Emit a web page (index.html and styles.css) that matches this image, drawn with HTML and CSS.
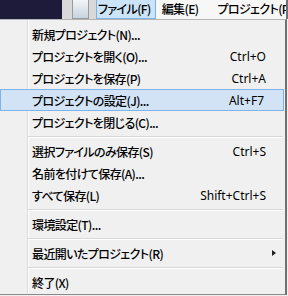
FILE: index.html
```html
<!DOCTYPE html>
<html lang="ja">
<head>
  <meta charset="UTF-8" />
  <title>ファイル メニュー</title>
  <link rel="stylesheet" href="styles.css">
</head>
<body>
  <div class="topbar">
    <div class="desk"></div>
    <div class="pane"><div class="thumb"></div></div>
    <nav class="menubar">
      <span class="top-item open">ファイル(F)</span>
      <span class="top-item">編集(E)</span>
      <span class="top-item">プロジェクト(P)</span>
    </nav>
  </div>

  <div class="menu">
    <div class="row"><span class="label">新規プロジェクト(N)...</span><span class="key"></span><span class="tail"></span></div>
    <div class="row"><span class="label">プロジェクトを開く(O)...</span><span class="key">Ctrl+O</span><span class="tail"></span></div>
    <div class="row"><span class="label">プロジェクトを保存(P)</span><span class="key">Ctrl+A</span><span class="tail"></span></div>
    <div class="row hot"><span class="label">プロジェクトの設定(J)...</span><span class="key">Alt+F7</span><span class="tail"></span></div>
    <div class="row"><span class="label">プロジェクトを閉じる(C)...</span><span class="key"></span><span class="tail"></span></div>
    <div class="sep"></div>
    <div class="row"><span class="label">選択ファイルのみ保存(S)</span><span class="key">Ctrl+S</span><span class="tail"></span></div>
    <div class="row"><span class="label">名前を付けて保存(A)...</span><span class="key"></span><span class="tail"></span></div>
    <div class="row"><span class="label">すべて保存(L)</span><span class="key">Shift+Ctrl+S</span><span class="tail"></span></div>
    <div class="sep"></div>
    <div class="row"><span class="label">環境設定(T)...</span><span class="key"></span><span class="tail"></span></div>
    <div class="sep"></div>
    <div class="row"><span class="label">最近開いたプロジェクト(R)</span><span class="key"></span><span class="tail"><span class="arrow"></span></span></div>
    <div class="sep"></div>
    <div class="row"><span class="label">終了(X)</span><span class="key"></span><span class="tail"></span></div>
  </div>
</body>
</html>
```

FILE: styles.css
```css
html, body {
  margin: 0;
  padding: 0;
}
body {
  width: 288px;
  height: 296px;
  overflow: hidden;
  background: #f0f0f0;
  font-family: "Noto Sans CJK JP", "Noto Sans", sans-serif;
  font-feature-settings: "palt";
  font-size: 12px;
  font-weight: 500;
  letter-spacing: -0.6px;
  color: #000;
}

/* top strip */
.topbar {
  display: flex;
  height: 19px;
}
.desk {
  flex: 0 0 62px;
  background: #1e1b3a;
}
.pane {
  flex: 0 0 34px;
  background: #d9d9d9;
  display: flex;
  padding-left: 10px;
  box-sizing: border-box;
}
.thumb {
  width: 15px;
  height: 18px;
  border: 1px solid #9a9a9a;
  border-top: none;
  background: linear-gradient(#f2f5f8, #c9d3de);
}
.menubar {
  flex: 1;
  min-width: 0;
  overflow: hidden;
  display: flex;
  background: #f7f7f7;
  border-right: 2px solid #707070;
}
.top-item {
  height: 19px;
  line-height: 18px;
  padding: 0 12px 0 5px;
  box-sizing: border-box;
  border: 1px solid transparent;
  border-top: none;
  white-space: nowrap;
}
.top-item.open {
  background: #cce4f7;
  border-color: #7fb2e6;
  padding: 0 4px 0 1px;
}

/* dropdown */
.menu {
  width: 285px;
  height: 271px;
  border-top: 1px solid #b4b4b4;
  border-right: 2px solid #707070;
  border-bottom: 1px solid #8a8a8a;
  padding-top: 3px;
  background: linear-gradient(to right, #f0f0f0 27px, #dcdcdc 27px, #dcdcdc 28px, #ffffff 28px, #ffffff 29px, #f0f0f0 29px);
}
.row {
  display: flex;
  align-items: center;
  height: 22px;
  box-sizing: border-box;
  padding-left: 32px;
  white-space: nowrap;
}
.row.hot {
  background: #d1e3f5;
  border: 1px solid #7eb2e8;
  padding-left: 31px;
  margin-right: 1px;
}
.label {
  flex: 1;
}
.key {
  text-align: right;
  font-family: "Noto Sans", sans-serif;
  font-weight: 400;
  letter-spacing: 0;
}
.tail {
  width: 19px;
  display: flex;
  align-items: center;
}
.arrow {
  margin-left: 6px;
  width: 0;
  height: 0;
  border-top: 3.5px solid transparent;
  border-bottom: 3.5px solid transparent;
  border-left: 4px solid #202020;
}
.sep {
  height: 7px;
  margin-left: 28px;
  margin-right: 2px;
  background: linear-gradient(transparent 3px, #d7d7d7 3px, #d7d7d7 4px, #ffffff 4px, #ffffff 5px, transparent 5px);
}
```
